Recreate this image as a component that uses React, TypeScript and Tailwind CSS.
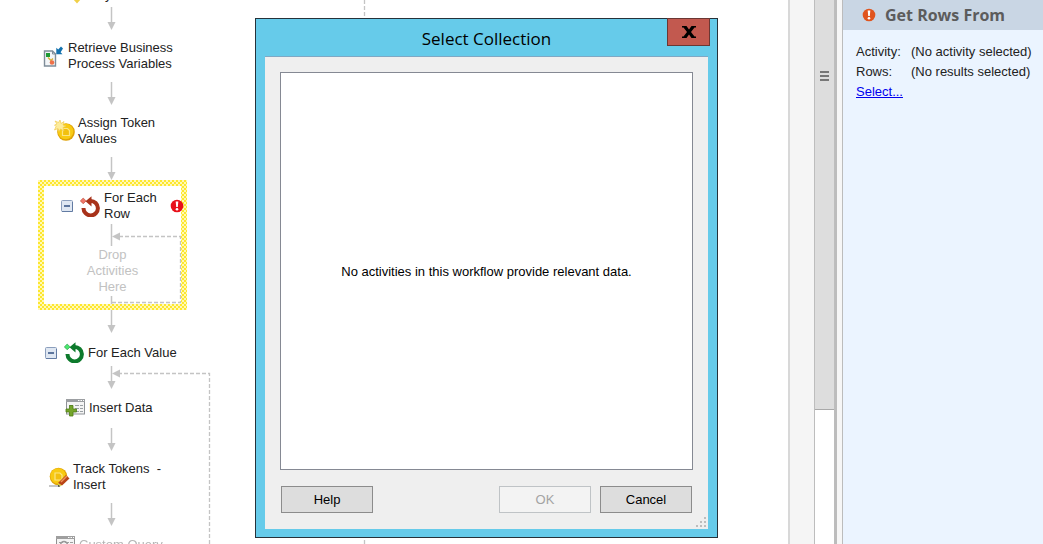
import type { ReactNode } from "react";

type WorkflowNode = {
    id: string;
    lines: string[];
    icon: ReactNode;
    place: string;
    muted?: boolean;
    expander?: boolean;
};

// x, y of the tip of every downward arrow and where its line starts
const arrows = [
    { x: 112, from: 7, to: 30 },
    { x: 112, from: 82, to: 105 },
    { x: 112, from: 157, to: 180 },
    { x: 112, from: 310, to: 333 },
    { x: 112, from: 366, to: 389 },
    { x: 112, from: 428, to: 451 },
    { x: 112, from: 503, to: 526 },
];

function ProcessIcon() {
    return (
        <svg width="20" height="22" viewBox="0 0 20 22" className="shrink-0">
            <path d="M1.500 6h8l3 3v12h-11z" fill="#f3f6f8" stroke="#7f8d99" strokeWidth="1.400" />
            <path d="M9.500 6v3h3" fill="none" stroke="#7f8d99" />
            <rect x="3" y="8" width="4" height="4" fill="#1d9a34" />
            <path d="M5 12.500l3 3 2-2" fill="none" stroke="#d8b23a" strokeWidth="1.500" />
            <circle cx="9" cy="17.500" r="2.300" fill="#f0714a" />
            <path d="M20 3.500L18 1.500l-2.800 2.900-1.900-1.700v6.500h6.200l-1.900-1.900z" fill="#1271ad" />
        </svg>
    );
}

function Coin({ cx, cy }: { cx: number; cy: number }) {
    return (
        <g>
            <circle cx={cx} cy={cy} r="8.800" fill="#dfa206" />
            <circle cx={cx - 0.4} cy={cy - 0.5} r="7.800" fill="#f8ca12" />
            <path
                d={`M${cx - 3.5} ${cy - 3.5}h5l2 2v5h-7z`}
                fill="#f2c00f"
                stroke="#fbe584"
                strokeWidth="1.200"
            />
        </g>
    );
}

function TokenIcon() {
    return (
        <svg width="22" height="22" viewBox="0 0 22 22" className="shrink-0">
            <Coin cx={12} cy={12} />
            <path
                d="M6 0l1 3.500L10 1.500 9 5l3 1-3 1.500L10 11 6.500 9 5 11.500 4 8.500.5 10 2 6.500.5 5 3 4 1 1l3.500 1.500z"
                fill="#fdec9c"
                stroke="#f0cb50"
                strokeWidth=".7"
            />
        </svg>
    );
}

function TrackIcon() {
    return (
        <svg width="22" height="21" viewBox="0 0 22 21" className="shrink-0">
            <Coin cx={9.5} cy={9.5} />
            <path d="M0 19h11" stroke="#b5b5b5" strokeWidth="1.500" />
            <path d="M9 16l8-8 3.500 3.500-7.500 7z" fill="#b94418" />
            <path d="M12 15l6-6" stroke="#f09458" strokeWidth="1.500" />
            <path d="M9 16l4 2.500-3.500 1z" fill="#d8d34c" />
            <path d="M9 18l2.500 1.200-2.500.5z" fill="#333" />
        </svg>
    );
}

function LoopIcon({ color, dot }: { color: string; dot: string }) {
    return (
        <svg width="21" height="21" viewBox="0 0 21 21" className="shrink-0">
            <path d="M3.500 12A7.200 7.200 0 1 0 10.500 5" fill="none" stroke={color} strokeWidth="4" />
            <path d="M5.500 5.200L11.500 .2v10.200z" fill={color} />
            <path d="M3.200 2l2.900 2.900-2.900 2.900L.3 4.900z" fill={dot} stroke={color} strokeWidth=".5" />
        </svg>
    );
}

function TableIcon({ plus }: { plus?: boolean }) {
    return (
        <svg width="21" height="19" viewBox="0 0 21 19" className="shrink-0">
            <rect x="1.500" y="1.500" width="18" height="14.500" fill="#f4f4f4" stroke="#8e9296" />
            <path d="M1 1h19v3H1z" fill="#9c9fa2" />
            <path d="M13 2.500h1.500M15.500 2.500H17M18 2.500h1" stroke="#fff" />
            <path d="M4 7.500h4M10 7.500h4M15 7.500h3M10 10.500h4M15 10.500h3M10 13.500h4M15 13.500h3" stroke="#9aa0a4" strokeWidth="1.200" />
            {plus ? (
                <path d="M4.500 7.500h3.500v3.500H11.500v3H8V18H4.500v-4H1v-3h3.500z" fill="#74a52a" stroke="#4f7d15" strokeWidth=".8" />
            ) : (
                <circle cx="9" cy="10" r="3.500" fill="none" stroke="#999" strokeWidth="1.500" />
            )}
        </svg>
    );
}

function Expander() {
    return (
        <button type="button" aria-label="Collapse" className="shrink-0">
            <svg width="12" height="12" viewBox="0 0 12 12" className="block">
                <rect x=".5" y=".5" width="11" height="11" rx="1" fill="#dfe7f2" stroke="#8c9fbd" />
                <path d="M1 11.500h10.500V2" fill="none" stroke="#627ba3" />
                <path d="M3 6h6" stroke="#314f80" strokeWidth="1.500" />
            </svg>
        </button>
    );
}

function AlertIcon({ color }: { color: string }) {
    return (
        <svg width="14" height="14" viewBox="0 0 14 14" className="shrink-0">
            <circle cx="7" cy="7" r="6.300" fill={color} />
            <path d="M5.700 2.500h2.600L7.800 8H6.200z" fill="#fff" />
            <circle cx="7" cy="10.300" r="1.300" fill="#fff" />
        </svg>
    );
}

const nodes: WorkflowNode[] = [
    { id: "retrieve", lines: ["Retrieve Business", "Process Variables"], icon: <ProcessIcon />, place: "left-[43px] top-[40px] gap-[5px]" },
    { id: "assign", lines: ["Assign Token", "Values"], icon: <TokenIcon />, place: "left-[54px] top-[115px] gap-[2px]" },
    { id: "value", lines: ["For Each Value"], icon: <LoopIcon color="#0d7a2c" dot="#4be86e" />, place: "left-[45px] top-[342px] gap-[3px]", expander: true },
    { id: "insert", lines: ["Insert Data"], icon: <TableIcon plus />, place: "left-[65px] top-[398px] gap-[3px]" },
    { id: "track", lines: ["Track Tokens  -", "Insert"], icon: <TrackIcon />, place: "left-[49px] top-[461px] gap-[2px]" },
    { id: "query", lines: ["Custom Query"], icon: <TableIcon />, place: "left-[55px] top-[535px] gap-[3px] grayscale", muted: true },
];

function Connectors() {
    return (
        <svg className="absolute inset-0 size-full" fill="none" stroke="#c4c4c4">
            {arrows.map((a) => (
                <g key={a.from}>
                    <path d={`M${a.x - 0.5} ${a.from}V${a.to - 6}`} strokeWidth="1.500" />
                    <path d={`M${a.x - 4.5} ${a.to - 8}h8l-4 8z`} fill="#c4c4c4" stroke="none" />
                </g>
            ))}
            <path d="M118 373.500h91.500V700" strokeDasharray="4 2" strokeWidth="1.300" />
            <path d="M112 373.500l8-4v8z" fill="#c4c4c4" stroke="none" />
            <path d="M364.500 0V700" strokeDasharray="4 2" strokeWidth="1.300" />
            <path d="M77 3.500L73 -1h8z" fill="#f0d048" stroke="none" />
        </svg>
    );
}

function ForEachRow() {
    return (
        <div className="absolute left-[38px] top-[180px] bg-[repeating-conic-gradient(#fde72e_0_25%,#fff8b8_0_50%)] bg-size-[4px_4px] p-[6px]">
            <div className="relative flex h-[118px] w-[137px] flex-col bg-white">
                <svg className="absolute inset-0 size-full" fill="none" stroke="#c4c4c4">
                    <path d="M67.500 38V60M67.500 110V118" strokeWidth="1.500" />
                    <path d="M75 50.500h61.500v66H68" strokeDasharray="4 2" strokeWidth="1.300" />
                    <path d="M68 50.500l8-4v8z" fill="#c4c4c4" stroke="none" />
                </svg>
                <div className="relative flex items-center pt-[4px] pl-[17px]">
                    <Expander />
                    <span className="ml-[7px]"><LoopIcon color="#a8321a" dot="#f0776a" /></span>
                    <span className="ml-[3px] w-[66px] shrink-0 leading-4">For Each<br />Row</span>
                    <AlertIcon color="#e8101a" />
                </div>
                <p className="mt-[25px] text-center leading-4 text-[#c2c2c2]">
                    Drop<br />Activities<br />Here
                </p>
            </div>
        </div>
    );
}

function SelectDialog() {
    return (
        <section
            role="dialog"
            aria-labelledby="dialog-title"
            className="absolute left-[255px] top-[18px] flex h-[520px] w-[463px] flex-col border border-[#26323a] bg-[#66cbea] px-[9px] pb-[8px] text-black"
        >
            <header className="flex h-[37px] items-center justify-center">
                <h1 id="dialog-title" className="pt-[3px] font-['Open_Sans',sans-serif] text-[17px] leading-6">Select Collection</h1>
                <button
                    type="button"
                    aria-label="Close"
                    className="absolute -top-px right-[7px] flex h-[28px] w-[43px] items-center justify-center border border-[#6b3733] bg-[#c2594f]"
                >
                    <svg width="14" height="12" viewBox="0 0 14 12">
                        <path d="M0 0h4.500L7 3.500 9.500 0H14v1.500h-1.500L9 6l3.500 4.500H14V12H9.500L7 8.500 4.500 12H0v-1.500h1.500L5 6 1.500 1.500H0z" fill="#000" />
                    </svg>
                </button>
            </header>
            <div className="relative flex flex-1 flex-col border-t border-[#7fa8c4] bg-[#efefef] px-[15px] pt-[15px] pb-[16px]">
                <div className="flex flex-1 items-center justify-center border border-[#858993] bg-white pt-[2px]">
                    No activities in this workflow provide relevant data.
                </div>
                <div className="mt-4 flex gap-[9px] px-px">
                    <button type="button" className="h-[27px] w-[92px] border border-[#8c8c8c] bg-[#dddddd]">Help</button>
                    <button type="button" disabled className="ml-auto h-[27px] w-[92px] border border-[#bfc3c6] bg-[#f3f3f3] text-[#a3a3a3]">OK</button>
                    <button type="button" className="h-[27px] w-[92px] border border-[#8c8c8c] bg-[#dddddd]">Cancel</button>
                </div>
                <svg width="11" height="11" className="absolute right-[1px] bottom-[1px]" fill="#bdbdbd">
                    <path d="M8 0h2v2H8zM4 4h2v2H4zM8 4h2v2H8zM0 8h2v2H0zM4 8h2v2H4zM8 8h2v2H8z" />
                </svg>
            </div>
        </section>
    );
}

export default function App() {
    return (
        <div className="flex h-screen overflow-hidden bg-white font-['Liberation_Sans',Arial,sans-serif] text-[13px] text-[#222]">
            <main className="relative flex-1 overflow-hidden">
                <Connectors />
                <span className="absolute -top-[13px] left-[105px] leading-4">y</span>
                {nodes.map((node) => (
                    <div key={node.id} className={`absolute flex items-center ${node.place}`}>
                        {node.expander && <span className="mr-[4px] flex"><Expander /></span>}
                        {node.icon}
                        <div className={node.muted ? "text-[#b5b5b5]" : ""}>
                            {node.lines.map((line) => (
                                <p key={line} className="whitespace-pre leading-4">{line}</p>
                            ))}
                        </div>
                    </div>
                ))}
                <ForEachRow />
                <SelectDialog />
            </main>

            {/* Scroll bar and splitter */}
            <div className="w-[26px] border-l-2 border-[#d8d8d8] bg-[#f5f5f5]" />
            <div className="w-[21px] border-x border-[#bdbdbd] bg-white">
                <div className="flex h-[410px] flex-col items-center gap-[2px] border-b border-[#a9a9a9] bg-[#dddddd] pt-[71px]">
                    <span className="h-[2px] w-[9px] bg-[#777]" />
                    <span className="h-[2px] w-[9px] bg-[#777]" />
                    <span className="h-[2px] w-[9px] bg-[#777]" />
                </div>
            </div>
            <div className="w-[8px] border-r border-l-2 border-r-[#bcbcbc] border-l-[#bcbcbc] bg-[#f6f6f6]" />

            <aside className="w-[200px] shrink-0 bg-[#ebf4ff]">
                <header className="flex h-[30px] items-center gap-[9px] bg-[#c9d6e4] pl-[19px]">
                    <AlertIcon color="#e0541d" />
                    <h2 className="font-['Open_Sans',sans-serif] text-[16px] leading-6 font-bold text-[#5c5c5c]">Get Rows From</h2>
                </header>
                <dl className="grid grid-cols-[55px_1fr] pt-[12px] pl-[13px] leading-5 whitespace-nowrap">
                    <dt>Activity:</dt>
                    <dd>(No activity selected)</dd>
                    <dt>Rows:</dt>
                    <dd>(No results selected)</dd>
                </dl>
                <a href="#select" className="ml-[13px] leading-5 text-[#0000ee] underline">Select...</a>
            </aside>
        </div>
    );
}
